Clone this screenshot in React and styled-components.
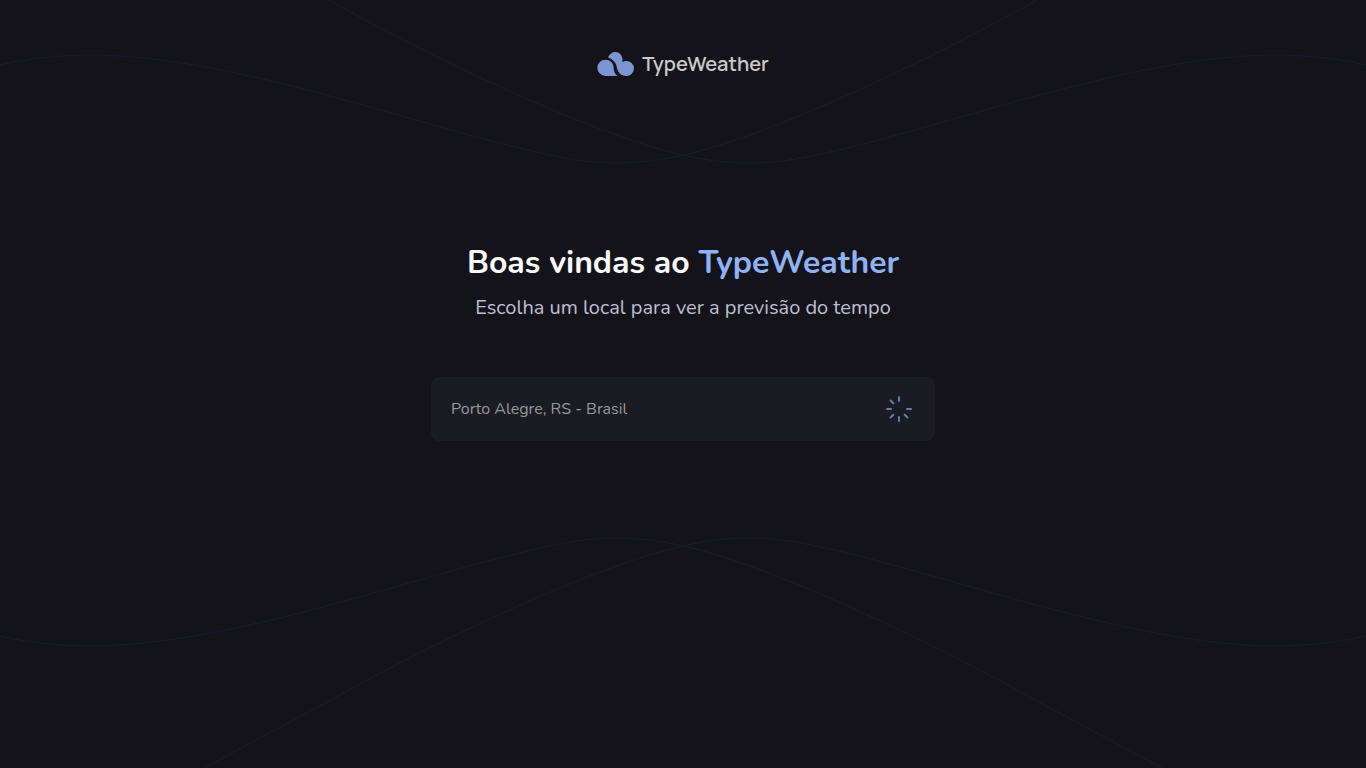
import React from "react";
import styled, { createGlobalStyle } from "styled-components";

const GlobalStyle = createGlobalStyle`
  * {
    box-sizing: border-box;
  }
  body {
    margin: 0;
    background: #141319;
    color: #fafafa;
    font-family: "Nunito", "Lato", sans-serif;
  }
`;

const Page = styled.div`
  position: relative;
  min-height: 100vh;
  padding: 48px 24px;
  overflow: hidden;
  display: flex;
  flex-direction: column;
  align-items: center;
`;

const Waves = styled.svg`
  position: absolute;
  inset: 0;
  width: 100%;
  height: 100%;
  fill: none;
  stroke: url(#wave-stroke);
  pointer-events: none;
`;

const Logo = styled.header`
  display: flex;
  align-items: center;
  gap: 8px;
  height: 32px;
  color: #cacaca;
  font-family: "Manrope", "Inter", sans-serif;
  font-size: 20px;
  line-height: 32px;
  font-weight: 600;
  z-index: 1;
`;

const LogoMark = styled.svg`
  width: 37px;
  height: 24px;
  fill: #7b96d0;
`;

const Main = styled.main`
  width: 100%;
  max-width: 504px;
  margin-top: 160px;
  text-align: center;
  z-index: 1;
`;

const Title = styled.h1`
  margin: 0;
  font-size: 32px;
  line-height: 46px;
  font-weight: 700;
`;

const Brand = styled.span`
  color: #8fb2f5;
`;

const Subtitle = styled.p`
  margin: 6px 0 0;
  color: #bfbfd4;
  font-size: 20px;
  line-height: 32px;
`;

const SearchForm = styled.form`
  display: flex;
  align-items: center;
  height: 64px;
  margin-top: 53px;
  padding: 0 20px;
  border-radius: 8px;
  background: #1b1b23;
`;

const CityInput = styled.input`
  flex: 1;
  min-width: 0;
  padding: 0;
  border: 0;
  outline: 0;
  background: transparent;
  color: #98989b;
  font-family: inherit;
  font-size: 16px;
  line-height: 24px;
`;

const Spinner = styled.svg`
  width: 32px;
  height: 32px;
  fill: none;
  stroke: #647aad;
  stroke-width: 2;
  stroke-linecap: round;
`;

const wave =
  "M-10 67 Q40 55 90 55 C240 55 440 135 565 158 C605 166 645 164 683 155 C770 136 930 60 1037 0 L1162 -67";

export default function App() {
  return (
    <>
      <GlobalStyle />
      <Page>
        <Waves viewBox="0 0 1366 768" preserveAspectRatio="none" aria-hidden="true">
          <defs>
            <linearGradient id="wave-stroke" gradientUnits="userSpaceOnUse" x1="0" y1="0" x2="1366" y2="0">
              <stop offset="0" stopColor="#161b30" />
              <stop offset="0.5" stopColor="#171c2d" />
              <stop offset="0.85" stopColor="#1a1c24" />
            </linearGradient>
            <path id="wave" d={wave} />
          </defs>
          <use href="#wave" />
          <use href="#wave" transform="translate(1366 0) scale(-1 1)" />
          <use href="#wave" transform="translate(0 701) scale(1 -1)" />
          <use href="#wave" transform="translate(1366 701) scale(-1 -1)" />
        </Waves>
        <Logo>
          <LogoMark viewBox="0 0 37 24" aria-hidden="true">
            <g transform="translate(0.5 0)">
              <path d="M8 7.7C13 7.7 15.6 11 16 15C16.3 19 17 22 20 24H8A8.15 8.15 0 0 1 8 7.7Z" />
              <path d="M10.5 5.5C12 2 14.5 0 17.5 0C22 0 25 3.5 25 8C25 9 25 9.4 24.6 10.2C26 9.4 27.5 9 29 9A7.5 7.5 0 0 1 29 24C24 24 20.5 21 19.5 16C18.8 11 16 7.5 10.5 5.5Z" />
            </g>
          </LogoMark>
          TypeWeather
        </Logo>
        <Main>
          <Title>
            Boas vindas ao <Brand>TypeWeather</Brand>
          </Title>
          <Subtitle>Escolha um local para ver a previsão do tempo</Subtitle>
          <SearchForm onSubmit={(event) => event.preventDefault()}>
            <CityInput type="text" aria-label="Buscar local" defaultValue="Porto Alegre, RS - Brasil" />
            <Spinner viewBox="0 0 32 32" role="status" aria-label="Carregando">
              <path d="M16 4v4M24 16h4M21.7 21.7l2.8 2.8M16 24v4M10.3 21.7l-2.8 2.8M4 16h4M7.5 7.5l2.8 2.8" />
            </Spinner>
          </SearchForm>
        </Main>
      </Page>
    </>
  );
}
